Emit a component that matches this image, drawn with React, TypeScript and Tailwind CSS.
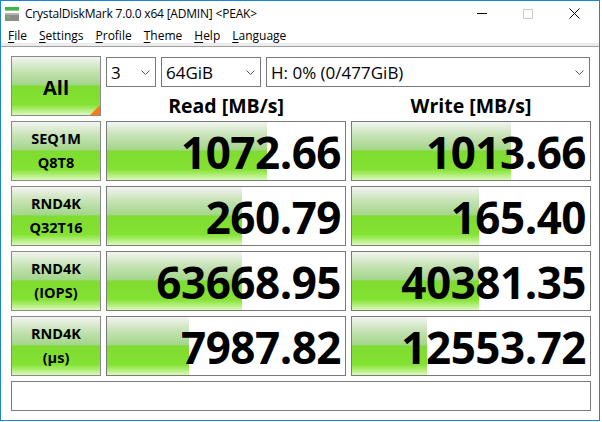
import type { ReactNode } from 'react';

const ui = "font-['Open_Sans','Noto_Sans',sans-serif]";
const greenFill =
  'bg-[linear-gradient(180deg,#f3f4f1_0%,#c4e2b2_25%,#a3d68a_48%,#7fdc30_50%,#84e233_82%,#dbf9bd_100%)]';

type Row = { top: string; bottom: string; read: string; write: string; readBar: number; writeBar: number };

const rows: Row[] = [
  { top: 'SEQ1M', bottom: 'Q8T8', read: '1072.66', write: '1013.66', readBar: 160, writeBar: 159 },
  { top: 'RND4K', bottom: 'Q32T16', read: '260.79', write: '165.40', readBar: 135, writeBar: 127 },
  { top: 'RND4K', bottom: '(IOPS)', read: '63668.95', write: '40381.35', readBar: 135, writeBar: 127 },
  { top: 'RND4K', bottom: '(μs)', read: '7987.82', write: '12553.72', readBar: 82, writeBar: 75 },
];

function Chevron() {
  return (
    <svg width="9" height="5" viewBox="0 0 9 5" className="shrink-0">
      <polyline points="0.5,0.5 4.5,4.5 8.5,0.5" fill="none" stroke="#555" strokeWidth="1" />
    </svg>
  );
}

function Combo({ value, width }: { value: string; width: string }) {
  return (
    <div className={`${width} h-[30px] border border-[#7a7a7a] bg-white flex items-center justify-between pl-[4px] pr-[5px]`}>
      <span className="text-[17px] leading-none text-black">{value}</span>
      <Chevron />
    </div>
  );
}

function Result({ value, bar }: { value: string; bar: number }) {
  return (
    <div className="relative w-[240px] h-[60px] border border-[#7a7a7a] bg-white flex items-center justify-end pr-[4px] overflow-hidden">
      {/* bar length is log-scaled by the benchmark, stored in px */}
      <div className={`absolute left-0 top-0 bottom-0 ${greenFill}`} style={{ width: bar }} />
      <span className="relative text-[44px] font-bold leading-none tracking-[-0.5px] text-black pt-[2px]">{value}</span>
    </div>
  );
}

function MenuItem({ k, rest }: { k: string; rest: string }) {
  return (
    <span>
      <span className="underline underline-offset-2">{k}</span>
      {rest}
    </span>
  );
}

function Label({ children }: { children: ReactNode }) {
  return (
    <div className={`w-[90px] h-[60px] border border-[#8a8a8a] ${greenFill} flex flex-col items-center justify-center text-[14.5px] font-bold leading-[24px] text-black`}>
      {children}
    </div>
  );
}

export default function App() {
  return (
    <div className={`w-[602px] h-[422px] bg-white ${ui}`}>
      <div className="w-[600px] h-[421px] border border-[#1a84d8] flex flex-col">
        {/* title bar */}
        <div className="h-[25px] flex items-center">
          <svg width="16" height="16" viewBox="0 0 16 16" className="ml-[3px] mr-[5px]">
            <rect x="1" y="1" width="14" height="3" fill="#3cb54a" />
            <rect x="1" y="4" width="14" height="1" fill="#7fd47f" />
            <rect x="1" y="7" width="14" height="8" fill="#8c8c8c" />
            <rect x="1" y="7" width="14" height="2" fill="#b4b4b4" />
            <rect x="3" y="10" width="3" height="2" fill="#4fd04f" />
          </svg>
          <span className="text-[12px] text-black tracking-[-0.2px]">CrystalDiskMark 7.0.0 x64 [ADMIN] &lt;PEAK&gt;</span>
          <div className="ml-auto flex items-center h-full">
            <div className="w-[46px] h-full flex items-center justify-center">
              <div className="w-[10px] h-px bg-black" />
            </div>
            <div className="w-[46px] h-full flex items-center justify-center">
              <div className="w-[10px] h-[10px] border border-[#cccccc]" />
            </div>
            <div className="w-[46px] h-full flex items-center justify-center mr-[2px]">
              <svg width="11" height="11" viewBox="0 0 11 11">
                <path d="M0.5 0.5 L10.5 10.5 M10.5 0.5 L0.5 10.5" stroke="#000" strokeWidth="1" />
              </svg>
            </div>
          </div>
        </div>

        {/* menu bar */}
        <div className="h-[17px] flex items-center gap-[12px] pl-[7px] pt-[2px] text-[12px] text-black">
          <MenuItem k="F" rest="ile" />
          <MenuItem k="S" rest="ettings" />
          <MenuItem k="P" rest="rofile" />
          <MenuItem k="T" rest="heme" />
          <MenuItem k="H" rest="elp" />
          <MenuItem k="L" rest="anguage" />
        </div>
        <div className="h-[3px] bg-[#ececec]" />
        <div className="h-px bg-[#a0a0a0]" />

        {/* benchmark panel */}
        <div className="flex flex-col gap-[5px] pt-[9px] pl-[10px]">
          <div className="flex gap-[5px] h-[60px]">
            <div className={`relative w-[90px] h-[60px] border border-[#8a8a8a] ${greenFill} flex items-center justify-center pt-[3px]`}>
              <span className="text-[20px] font-bold text-black">All</span>
              <svg width="10" height="10" viewBox="0 0 10 10" className="absolute right-0 bottom-0">
                <polygon points="10,0 10,10 0,10" fill="#ff7b0f" />
              </svg>
            </div>
            <div className="flex flex-col h-[60px]">
              <div className="flex gap-[5px] mt-[1px]">
                <Combo value="3" width="w-[50px]" />
                <Combo value="64GiB" width="w-[100px]" />
                <Combo value="H: 0% (0/477GiB)" width="w-[324px]" />
              </div>
              <div className="flex gap-[5px] mt-[8px] h-[21px] text-[19.5px] font-bold leading-[21px] text-black">
                <div className="w-[240px] text-center">Read [MB/s]</div>
                <div className="w-[240px] text-center">Write [MB/s]</div>
              </div>
            </div>
          </div>

          {rows.map((r) => (
            <div key={r.bottom} className="flex gap-[5px]">
              <Label>
                <span>{r.top}</span>
                <span>{r.bottom}</span>
              </Label>
              <Result value={r.read} bar={r.readBar} />
              <Result value={r.write} bar={r.writeBar} />
            </div>
          ))}

          <div className="w-[580px] h-[30px] border border-[#7a7a7a] bg-white" />
        </div>
      </div>
    </div>
  );
}
